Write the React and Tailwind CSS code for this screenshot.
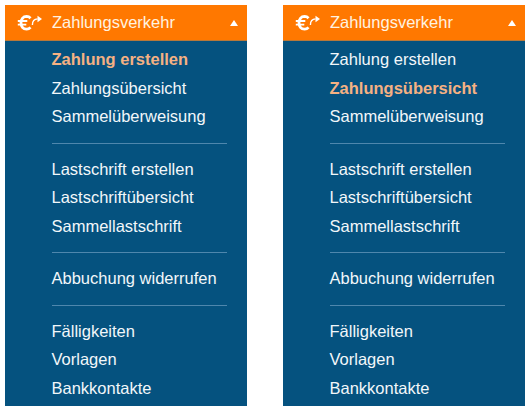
const groups = [
  ['Zahlung erstellen', 'Zahlungsübersicht', 'Sammelüberweisung'],
  ['Lastschrift erstellen', 'Lastschriftübersicht', 'Sammellastschrift'],
  ['Abbuchung widerrufen'],
  ['Fälligkeiten', 'Vorlagen', 'Bankkontakte'],
];

function EuroIcon() {
  return (
    <svg width="26" height="20" viewBox="0 0 26 20" fill="none" stroke="#fff">
      <path d="M13.5 5.2A5.4 5.4 0 0 0 9.6 3.4C5.9 3.4 4 6.4 4 9.8s1.9 6.4 5.6 6.4a5.4 5.4 0 0 0 3.9-1.8" strokeWidth="2.8" />
      <path d="M.8 8h9.5M.8 11.6h8.5" strokeWidth="1.8" />
      <path d="M15.4 12c0-3.8 1.8-6 5.2-6.1" strokeWidth="1.4" />
      <path d="M20.5 2.8 25 6l-4.5 3.2Z" fill="#fff" stroke="none" />
    </svg>
  );
}

function Menu({ active }) {
  return (
    <div className="w-[242px] h-[401px] bg-[#05527f] overflow-hidden">
      <div className="h-9 bg-[#ff7800] flex items-center pl-[12px] pr-[9px] text-[#fff3e0] border-b border-[#b8783a]">
        <EuroIcon />
        <span className="ml-[9px] text-[16.5px] flex-1">Zahlungsverkehr</span>
        <span className="w-0 h-0 border-x-[4.5px] border-x-transparent border-b-[6px] border-b-white" />
      </div>
      <div className="pl-[46.5px] pr-[20px] pt-[4px]">
        {groups.map((items, g) => (
          <div key={g} className={g > 0 ? 'border-t border-[#4f87ad] mt-[12px] pt-[11px]' : ''}>
            {items.map((item) => (
              <div
                key={item}
                className={
                  'h-[28.5px] leading-[28.5px] text-[16.5px] whitespace-nowrap ' +
                  (item === active ? 'font-bold text-[#f5b183]' : 'text-[#f2f7fa]')
                }
              >
                {item}
              </div>
            ))}
          </div>
        ))}
      </div>
    </div>
  );
}

export default function App() {
  return (
    <div className="w-[527px] h-[406px] bg-white pt-[5px] pl-[5px] flex gap-9 overflow-hidden font-['Liberation_Sans',Arial,sans-serif]">
      <Menu active="Zahlung erstellen" />
      <Menu active="Zahlungsübersicht" />
    </div>
  );
}
